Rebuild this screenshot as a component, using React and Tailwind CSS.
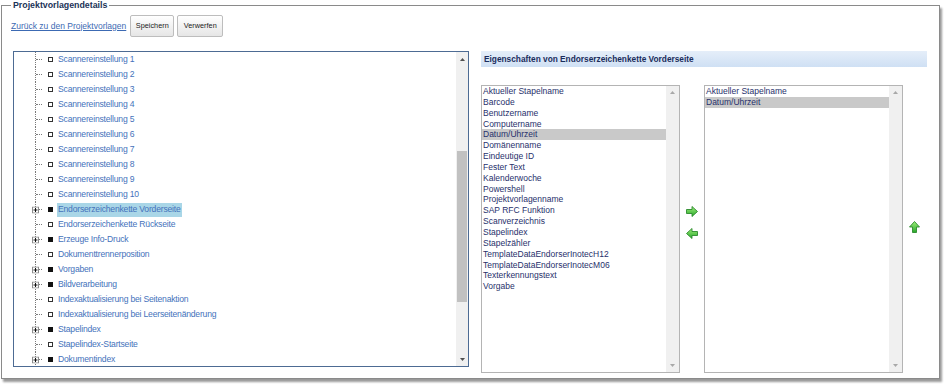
import React from "react";

const treeRows = [
  { label: "Scannereinstellung 1" },
  { label: "Scannereinstellung 2" },
  { label: "Scannereinstellung 3" },
  { label: "Scannereinstellung 4" },
  { label: "Scannereinstellung 5" },
  { label: "Scannereinstellung 6" },
  { label: "Scannereinstellung 7" },
  { label: "Scannereinstellung 8" },
  { label: "Scannereinstellung 9" },
  { label: "Scannereinstellung 10" },
  { label: "Endorserzeichenkette Vorderseite", expandable: true, selected: true },
  { label: "Endorserzeichenkette Rückseite" },
  { label: "Erzeuge Info-Druck", expandable: true },
  { label: "Dokumenttrennerposition" },
  { label: "Vorgaben", expandable: true },
  { label: "Bildverarbeitung", expandable: true },
  { label: "Indexaktualisierung bei Seitenaktion" },
  { label: "Indexaktualisierung bei Leerseitenänderung" },
  { label: "Stapelindex", expandable: true },
  { label: "Stapelindex-Startseite" },
  { label: "Dokumentindex", expandable: true },
];

const available = [
  "Aktueller Stapelname",
  "Barcode",
  "Benutzername",
  "Computername",
  "Datum/Uhrzeit",
  "Domänenname",
  "Eindeutige ID",
  "Fester Text",
  "Kalenderwoche",
  "Powershell",
  "Projektvorlagenname",
  "SAP RFC Funktion",
  "Scanverzeichnis",
  "Stapelindex",
  "Stapelzähler",
  "TemplateDataEndorserInotecH12",
  "TemplateDataEndorserInotecM06",
  "Texterkennungstext",
  "Vorgabe",
];

const chosen = ["Aktueller Stapelname", "Datum/Uhrzeit"];

function PlusBox() {
  return (
    <svg width="7" height="7" viewBox="0 0 7 7" className="absolute left-[-4px] top-1/2 -translate-y-1/2">
      <rect x="0.5" y="0.5" width="6" height="6" fill="#fff" stroke="#8c8c8c" />
      <path d="M1.5 3.5h4M3.5 1.5v4" stroke="#111" strokeWidth="1" />
    </svg>
  );
}

function TreeRow({ row }) {
  return (
    <div className="flex items-center h-[15px] shrink-0">
      <div className="w-[21px] shrink-0" />
      <div className="relative w-[8px] h-full shrink-0 border-l border-dotted border-[#7a7a7a] flex items-center">
        <div className="w-[6px] border-t border-dotted border-[#7a7a7a]" />
        {row.expandable && <PlusBox />}
      </div>
      <div className="w-[5px] shrink-0" />
      <div
        className={
          row.expandable
            ? "w-[5px] h-[5px] bg-[#111] shrink-0"
            : "w-[5px] h-[5px] border border-[#333] bg-white shrink-0"
        }
      />
      <div
        className={
          "ml-[4px] px-[1px] h-[14px] flex items-center whitespace-nowrap text-[8.6px] tracking-[-0.2px] text-[#4472bb] " +
          (row.selected ? "bg-[#a9d6e7]" : "")
        }
      >
        {row.label}
      </div>
    </div>
  );
}

function Tri({ up, color }) {
  return (
    <svg width="5" height="3" viewBox="0 0 5 3">
      <path d={up ? "M0 3L2.5 0L5 3Z" : "M0 0L2.5 3L5 0Z"} fill={color} />
    </svg>
  );
}

function ListBox({ items, selected }) {
  return (
    <div className="w-[199px] h-full border border-[#b4b4b4] bg-white flex">
      <div className="flex-1 flex flex-col">
        {items.map((it) => (
          <div
            key={it}
            className={
              "h-[10.85px] leading-[10.85px] pl-[1px] text-[8.5px] text-[#27306b] whitespace-nowrap " +
              (it === selected ? "bg-[#c9c9c9]" : "")
            }
          >
            {it}
          </div>
        ))}
      </div>
      <div className="w-[13px] bg-[#f0f0f0] flex flex-col items-center justify-between py-[5px]">
        <Tri up color="#a8a8a8" />
        <Tri color="#a8a8a8" />
      </div>
    </div>
  );
}

function GreenArrow({ dir }) {
  const pts = {
    right: "0.5,3.5 6,3.5 6,0.5 11.5,5.5 6,10.5 6,7.5 0.5,7.5",
    left: "11.5,3.5 6,3.5 6,0.5 0.5,5.5 6,10.5 6,7.5 11.5,7.5",
    up: "3.5,11.5 3.5,6 0.5,6 5.5,0.5 10.5,6 7.5,6 7.5,11.5",
  }[dir];
  return (
    <svg width="12" height="12" viewBox="0 0 12 12">
      <defs>
        <linearGradient id={"g" + dir} x1="0" y1="0" x2="0" y2="1">
          <stop offset="0" stopColor="#9ff07a" />
          <stop offset="1" stopColor="#27a52a" />
        </linearGradient>
      </defs>
      <polygon points={pts} fill={"url(#g" + dir + ")"} stroke="#2b8a2d" strokeWidth="0.9" strokeLinejoin="round" />
    </svg>
  );
}

export default function App() {
  return (
    <div className="w-[947px] h-[387px] bg-white font-['Liberation_Sans',Arial,sans-serif] overflow-hidden">
      <fieldset className="ml-[1px] w-[939px] border border-[#8a8a8a] pl-[9px] pr-[12px] pb-[5px] shadow-[2px_3px_2px_rgba(0,0,0,0.4)]">
        <legend className="px-[2px] text-[8.8px] leading-[11px] font-bold text-[#1b3358]">
          Projektvorlagendetails
        </legend>

        <div className="flex items-center mt-[4px] h-[22px]">
          <a href="#" className="text-[8.5px] text-[#3c6ab3] underline">
            Zurück zu den Projektvorlagen
          </a>
          <button className="ml-[4px] w-[44px] h-[22px] rounded-[2px] border border-[#bdbdbd] bg-gradient-to-b from-white to-[#e6e6e6] text-[7.3px] text-[#222]">
            Speichern
          </button>
          <button className="ml-[3px] w-[46px] h-[22px] rounded-[2px] border border-[#bdbdbd] bg-gradient-to-b from-white to-[#e6e6e6] text-[7.3px] text-[#222]">
            Verwerfen
          </button>
        </div>

        <div className="flex mt-[14px] ml-[2px]">
          <div className="w-[456px] h-[316px] border border-[#4d6b93] flex bg-white">
            <div className="flex-1 flex flex-col overflow-hidden">
              {treeRows.map((r) => (
                <TreeRow key={r.label} row={r} />
              ))}
            </div>
            <div className="w-[12px] bg-[#f0f0f0] flex flex-col items-center">
              <div className="h-[14px] flex items-center">
                <Tri up color="#505050" />
              </div>
              <div className="mt-[85px] w-[10px] h-[151px] bg-[#c1c1c1]" />
              <div className="flex-1" />
              <div className="h-[14px] flex items-center">
                <Tri color="#505050" />
              </div>
            </div>
          </div>

          <div className="ml-[12px] w-[446px] flex flex-col">
            <div className="h-[16px] flex items-center px-[3px] bg-gradient-to-b from-[#e5eef9] to-[#cfe0f4] text-[8.3px] font-bold text-[#1a2d5c] whitespace-nowrap">
              Eigenschaften von Endorserzeichenkette Vorderseite
            </div>
            <div className="flex mt-[18px] h-[288px]">
              <ListBox items={available} selected="Datum/Uhrzeit" />
              <div className="w-[24px] flex flex-col items-center justify-center gap-[10px] pb-[12px]">
                <GreenArrow dir="right" />
                <GreenArrow dir="left" />
              </div>
              <ListBox items={chosen} selected="Datum/Uhrzeit" />
              <div className="w-[24px] flex items-center justify-center pb-[4px]">
                <GreenArrow dir="up" />
              </div>
            </div>
          </div>
        </div>
      </fieldset>
    </div>
  );
}
